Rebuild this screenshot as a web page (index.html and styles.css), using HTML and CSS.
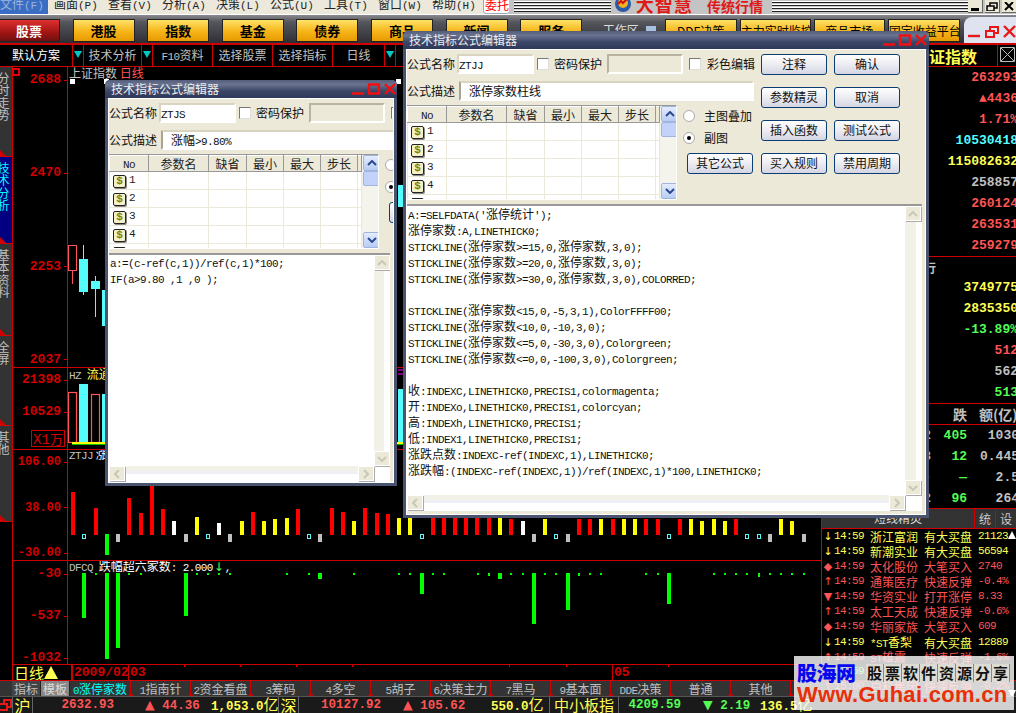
FILE: index.html
```html
<!DOCTYPE html>
<html lang="zh-CN">
<head>
<meta charset="utf-8">
<title>大智慧 传统行情</title>
<link rel="stylesheet" href="styles.css">
</head>
<body>
<div class="app">
  <header class="menubar">
    <nav class="menus">
      <span class="menu active">文件<i>(F)</i></span>
      <span class="menu">画面<i>(P)</i></span>
      <span class="menu">查看<i>(V)</i></span>
      <span class="menu">分析<i>(A)</i></span>
      <span class="menu">决策<i>(L)</i></span>
      <span class="menu">公式<i>(U)</i></span>
      <span class="menu">工具<i>(T)</i></span>
      <span class="menu">窗口<i>(W)</i></span>
      <span class="menu">帮助<i>(H)</i></span>
      <span class="trade">委托</span>
    </nav>
    <div class="brand">
      <span class="stripes s1"></span>
      <svg class="logo" width="16" height="12" viewBox="0 0 16 12"><circle cx="8" cy="4" r="8" fill="#2a5aa8"/><circle cx="8" cy="3" r="5" fill="#f0b020"/><path d="M3 4l3-3 2 2 4-4" stroke="#d01010" stroke-width="2" fill="none"/></svg>
      <b class="brand-a">大智慧</b><b class="brand-b">传统行情</b>
      <span class="stripes s2"></span>
    </div>
    <div class="winbtns">
      <span class="wb"><svg width="10" height="9"><rect x="1" y="6" width="8" height="3"/></svg></span>
      <span class="wb"><svg width="12" height="9" fill="none" stroke="#000" stroke-width="1.5"><path d="M1 4h7v5H1zM4 4V1h7v5H8"/></svg></span>
      <span class="wb"><svg width="10" height="9" fill="none" stroke="#000" stroke-width="2"><path d="M1 0l8 8M9 0L1 8"/></svg></span>
    </div>
  </header>

  <div class="marketbar">
    <span class="mk red">股票</span>
    <span class="mk">港股</span>
    <span class="mk">指数</span>
    <span class="mk">基金</span>
    <span class="mk">债券</span>
    <span class="mk">商品</span>
    <span class="mk">新闻</span>
    <span class="mk">服务</span>
    <span class="workspace">工作区<em></em></span>
    <span class="qk w72">DDE决策</span>
    <span class="qk">主力实时监控</span>
    <span class="qk">商品市场</span>
    <span class="qk w72">固定收益平台</span>
    <div class="mdi">
      <svg width="48" height="14" viewBox="0 0 48 14" fill="none" stroke="#e81818" stroke-width="2.4"><path d="M0 11h12"/><path d="M18 6h8v6h-8zM22 5V2h8v6h-3" stroke-width="2"/><path d="M36 1l11 11M47 1L36 12"/></svg>
    </div>
  </div>

  <div class="toolbar">
    <span class="tb w71">默认方案</span><span class="drop"></span>
    <span class="tb w57 dim">技术分析</span><span class="drop"></span>
    <span class="tb w60 dim"><i>F10</i>资料</span>
    <span class="tb w60 dim">选择股票</span>
    <span class="tb w60 dim">选择指标</span>
    <span class="tb w58 dim">日线</span><span class="drop"></span>
    <span class="rt-title">上证指数</span>
    <span class="closer"><svg width="17" height="17" fill="none" stroke="#bbb"><path d="M1.500 1.500h14v14h-14zM2 2l13 13M15 2L2 15"/></svg></span>
  </div>

  <main class="workspace-area">
    <aside class="side">
      <div class="side-item h90">分时走势</div>
      <div class="side-item h87 on">技术分析</div>
      <div class="side-item h92">基本资料</div>
      <div class="side-item h90">全屏</div>
      <div class="side-item h96">其他</div>
    </aside>

    <div class="panes">
      <section class="pane p1">
        <div class="axis ax1">
          <span class="mark"></span>
          <b>2688</b><b>2470</b><b>2253</b><b>2037</b>
        </div>
        <div class="plot">
          <div class="legend l1"><span class="cj grey">上证指数</span> <span class="cj red-t">日线</span></div>
          <svg class="chart" viewBox="68 67 753 300" width="753" height="300">
            <g fill="#fff"><rect x="70" y="79" width="5" height="5"/><rect x="104" y="79" width="5" height="5"/><rect x="396" y="79" width="5" height="5"/></g>
            <path d="M72.500 271v13" stroke="#ff5555"/><rect x="68.500" y="245.500" width="8" height="25" fill="none" stroke="#ff5555"/>
            <path d="M83.500 245v50M95.500 276v41" stroke="#54fcfc"/>
            <rect x="79" y="259" width="9" height="33" fill="#54fcfc"/><rect x="91" y="281" width="9" height="8" fill="#54fcfc"/><rect x="102" y="290" width="9" height="36" fill="#54fcfc"/>
            <rect x="398" y="185" width="5" height="22" fill="#54fcfc"/>
          </svg>
        </div>
      </section>

      <section class="pane p2">
        <div class="axis ax2">
          <b>21398</b><b>10529</b>
          <span class="unit">X1<span class="cj">万</span></span>
        </div>
        <div class="plot">
          <div class="legend l2"><i class="grey">HZ</i> <span class="cj yel">流通</span></div>
          <svg class="chart" viewBox="68 368 753 81" width="753" height="81">
            <rect x="68.500" y="392.500" width="8" height="50" fill="none" stroke="#ff5555" stroke-width="1.200"/>
            <rect x="79" y="384" width="9" height="59" fill="#54fcfc"/>
            <rect x="91.500" y="394.500" width="8" height="48" fill="none" stroke="#ff5555" stroke-width="1.200"/>
            <rect x="102" y="394" width="9" height="49" fill="#54fcfc"/>
            <rect x="398" y="389" width="5" height="54" fill="#54fcfc"/>
            <rect x="72" y="442" width="331" height="2" fill="#ffff00"/><rect x="72" y="444" width="331" height="1" fill="#00c000"/>
            <path d="M398 370h5M398 374h5" stroke="#ff00ff"/>
          </svg>
        </div>
      </section>

      <section class="pane p3">
        <div class="axis ax3 small"><b>106.00</b><b>38.00</b><b>-30.00</b></div>
        <div class="plot">
          <div class="legend l3"><i class="grey">ZTJJ</i> <span class="cj">涨停</span></div>
          <svg class="chart" viewBox="68 450 753 110" width="753" height="110">
            <g fill="#ff0000">
              <rect x="71" y="492" width="4" height="43"/><rect x="94" y="508" width="4" height="27"/><rect x="127" y="498" width="4" height="37"/><rect x="139" y="513" width="4" height="22"/><rect x="150" y="486" width="4" height="49"/><rect x="161" y="509" width="4" height="26"/><rect x="251" y="512" width="4" height="23"/><rect x="296" y="509" width="4" height="26"/><rect x="330" y="508" width="4" height="27"/><rect x="341" y="512" width="4" height="23"/><rect x="363" y="508" width="4" height="27"/><rect x="375" y="513" width="4" height="22"/><rect x="386" y="514" width="4" height="21"/><rect x="431" y="517" width="4" height="18"/><rect x="442" y="517" width="4" height="18"/><rect x="453" y="517" width="4" height="18"/><rect x="464" y="517" width="4" height="18"/><rect x="475" y="517" width="4" height="18"/><rect x="487" y="517" width="4" height="18"/><rect x="509" y="519" width="4" height="16"/><rect x="577" y="519" width="4" height="16"/><rect x="588" y="519" width="4" height="16"/><rect x="611" y="519" width="4" height="16"/><rect x="644" y="519" width="4" height="16"/><rect x="656" y="519" width="4" height="16"/><rect x="678" y="519" width="4" height="16"/><rect x="734" y="519" width="4" height="16"/>
            </g>
            <g fill="#ffff00">
              <rect x="195" y="517" width="4" height="18"/><rect x="240" y="521" width="4" height="14"/><rect x="262" y="521" width="4" height="14"/><rect x="273" y="519" width="4" height="16"/><rect x="285" y="518" width="4" height="17"/><rect x="352" y="521" width="4" height="14"/><rect x="397" y="518" width="4" height="17"/><rect x="408" y="518" width="4" height="17"/><rect x="498" y="517" width="4" height="18"/><rect x="543" y="519" width="4" height="16"/><rect x="599" y="519" width="4" height="16"/><rect x="622" y="519" width="4" height="16"/><rect x="633" y="519" width="4" height="16"/><rect x="689" y="519" width="4" height="16"/><rect x="700" y="521" width="4" height="14"/><rect x="712" y="519" width="4" height="16"/><rect x="723" y="521" width="4" height="14"/><rect x="779" y="519" width="4" height="16"/><rect x="790" y="521" width="4" height="14"/>
            </g>
            <g fill="#fff"><rect x="172" y="521" width="4" height="14"/><rect x="217" y="523" width="4" height="12"/><rect x="521" y="521" width="4" height="14"/></g>
            <g fill="#c0c0c0"><rect x="116" y="534" width="4" height="8"/><rect x="184" y="534" width="4" height="8"/><rect x="228" y="534" width="4" height="8"/><rect x="318" y="534" width="4" height="8"/><rect x="532" y="534" width="4" height="8"/><rect x="566" y="534" width="4" height="8"/><rect x="768" y="534" width="4" height="8"/><rect x="802" y="534" width="4" height="8"/></g>
            <rect x="105" y="534" width="4" height="21" fill="#00ff00"/>
            <g fill="none" stroke="#54fcfc"><rect x="82.500" y="534.500" width="3" height="4"/><rect x="206.500" y="534.500" width="3" height="4"/><rect x="307.500" y="534.500" width="3" height="4"/><rect x="420.500" y="534.500" width="3" height="4"/><rect x="554.500" y="534.500" width="3" height="4"/><rect x="667.500" y="534.500" width="3" height="4"/><rect x="745.500" y="534.500" width="3" height="4"/><rect x="757.500" y="534.500" width="3" height="4"/></g>
          </svg>
        </div>
      </section>

      <section class="pane p4">
        <div class="axis ax4"><b>-30</b><b>-537</b><b>-1032</b></div>
        <div class="plot">
          <div class="legend l4"><i class="grey">DFCQ</i> <span class="cj">跌幅超六家数</span><i>: 2.000</i><span class="down">↓</span><i>,</i></div>
          <svg class="chart" viewBox="68 561 753 103" width="753" height="103">
            <g fill="#00ff00">
              <rect x="82" y="573" width="4" height="45"/><rect x="105" y="573" width="4" height="86"/><rect x="116" y="573" width="4" height="75"/><rect x="184" y="573" width="4" height="43"/><rect x="318" y="573" width="4" height="6"/><rect x="420" y="573" width="4" height="21"/><rect x="498" y="573" width="4" height="6"/><rect x="532" y="573" width="4" height="51"/><rect x="566" y="573" width="4" height="37"/><rect x="667" y="573" width="4" height="31"/>
              <rect x="95" y="573" width="2" height="2"/><rect x="128" y="573" width="2" height="2"/><rect x="140" y="573" width="2" height="2"/><rect x="196" y="573" width="2" height="2"/><rect x="207" y="573" width="2" height="2"/><rect x="218" y="573" width="2" height="2"/><rect x="229" y="573" width="2" height="2"/><rect x="286" y="573" width="2" height="2"/><rect x="308" y="573" width="2" height="2"/><rect x="353" y="573" width="2" height="2"/><rect x="398" y="573" width="2" height="2"/><rect x="409" y="573" width="2" height="2"/><rect x="432" y="573" width="2" height="2"/><rect x="443" y="573" width="2" height="2"/><rect x="477" y="573" width="2" height="2"/><rect x="488" y="573" width="2" height="3"/><rect x="510" y="573" width="2" height="2"/><rect x="522" y="573" width="2" height="2"/><rect x="544" y="573" width="2" height="2"/><rect x="555" y="573" width="2" height="2"/><rect x="578" y="573" width="2" height="3"/><rect x="589" y="573" width="2" height="2"/><rect x="600" y="573" width="2" height="2"/><rect x="645" y="573" width="2" height="2"/><rect x="657" y="573" width="2" height="2"/><rect x="713" y="573" width="2" height="2"/><rect x="724" y="573" width="2" height="2"/><rect x="735" y="573" width="2" height="2"/><rect x="746" y="573" width="2" height="2"/><rect x="758" y="573" width="2" height="4"/><rect x="769" y="573" width="2" height="2"/><rect x="780" y="573" width="2" height="2"/><rect x="791" y="573" width="2" height="2"/><rect x="803" y="573" width="2" height="2"/>
            </g>
          </svg>
        </div>
      </section>

      <section class="timebar">
        <div class="period"><span class="cj">日线</span><span class="tri"></span></div>
        <div class="dates">
          <b class="d1">2009/02</b><b class="d2">03</b><b class="d3">05</b>
          <svg class="ticks" viewBox="73 0 748 3" width="748" height="3"><path d="M185.500 0v2M241.500 0v2M297.500 0v2M353.500 0v2M510.500 0v2M567.500 0v2M669.500 0v2" stroke="#d00000"/></svg>
        </div>
      </section>
    </div>

    <aside class="rightpanel">
      <div class="qrow red-t"><b>263293</b></div>
      <div class="qrow red-t"><b>▲4436</b></div>
      <div class="qrow red-t"><b>1.71%</b></div>
      <div class="qrow cyan"><b>10530418</b></div>
      <div class="qrow yel"><b>115082632</b></div>
      <div class="qrow grey"><b>258857</b></div>
      <div class="qrow red-t"><b>260124</b></div>
      <div class="qrow red-t"><b>263531</b></div>
      <div class="qrow red-t last"><b>259279</b></div>
      <div class="qrow cut grey"><span class="cj">行</span></div>
      <div class="qrow yel"><b>3749775</b></div>
      <div class="qrow yel"><b>2835350</b></div>
      <div class="qrow green"><b>-13.89%</b></div>
      <div class="qrow red-t"><b>512</b></div>
      <div class="qrow grey"><b>562</b></div>
      <div class="qrow green last"><b>513</b></div>
      <div class="trow head"><span></span><span class="cj">跌</span><span class="cj">额(亿)</span></div>
      <div class="trow"><b class="grey">2</b><b class="green">405</b><b class="grey">1030</b></div>
      <div class="trow"><b class="grey">8</b><b class="green">12</b><b class="grey">0.445</b></div>
      <div class="trow"><b class="grey">-</b><b class="green">—</b><b class="grey">2.5</b></div>
      <div class="trow"><b class="grey">2</b><b class="green">96</b><b class="grey">264</b></div>
      <div class="sprite-head"><span class="sprite-title">短线精灵</span><span class="st">统</span><span class="st">设</span></div>
      <div class="sprites">
        <div class="sp yel"><u>↓</u><i>14:59</i><span>浙江富润</span><span>有大买盘</span><i>21123</i></div>
        <div class="sp yel"><u>↓</u><i>14:59</i><span>新潮实业</span><span>有大买盘</span><i>56594</i></div>
        <div class="sp red-t"><u>◆</u><i>14:59</i><span>太化股份</span><span>大笔买入</span><i>2740</i></div>
        <div class="sp red-t"><u>↑</u><i>14:59</i><span>通策医疗</span><span>快速反弹</span><i>-0.4%</i></div>
        <div class="sp red-t"><u>▼</u><i>14:59</i><span>华资实业</span><span>打开涨停</span><i>8.33</i></div>
        <div class="sp red-t"><u>↑</u><i>14:59</i><span>太工天成</span><span>快速反弹</span><i>-0.6%</i></div>
        <div class="sp red-t"><u>◆</u><i>14:59</i><span>华丽家族</span><span>大笔买入</span><i>609</i></div>
        <div class="sp yel"><u>↓</u><i>14:59</i><span><i>*ST</i>香梨</span><span>有大买盘</span><i>12889</i></div>
        <div class="sp red-t"><u>↑</u><i>14:59</i><span><i>ST</i>雄震</span><span>快速反弹</span><i>-1.6%</i></div>
        <div class="sp green"><u>↓</u><i>14:59</i><span>大唐发电</span><span>大笔卖出</span><i>3120</i></div>
        <div class="sp red-t"><u>↑</u><i>15:00</i><span>白科集团</span><span>快速反弹</span><i>-0.2%</i></div>
        <div class="sp red-t"><u>↑</u><i>15:00</i><span>日科集团</span><span>快速反弹</span><i>-0.3%</i></div>
      </div>
      <span class="sc-up"></span><span class="sc-down"></span>
    </aside>
  </main>

  <nav class="subtabs">
    <span class="st-btn">指标</span><span class="st-btn tpl">模板</span>
    <span class="ft on"><i>0</i>涨停家数</span>
    <span class="ft"><i>1</i>指南针</span>
    <span class="ft"><i>2</i>资金看盘</span>
    <span class="ft"><i>3</i>筹码</span>
    <span class="ft"><i>4</i>多空</span>
    <span class="ft"><i>5</i>胡子</span>
    <span class="ft"><i>6</i>决策主力</span>
    <span class="ft"><i>7</i>黑马</span>
    <span class="ft"><i>9</i>基本面</span>
    <span class="ft"><i>DDE</i>决策</span>
    <span class="ft">普通</span>
    <span class="ft">其他</span>
  </nav>

  <footer class="status">
    <svg class="restore" width="12" height="14" fill="none" stroke="#e81818" stroke-width="2"><path d="M0 6h7v6H0M4 6V2h7v7H8"/></svg>
    <span class="ex">沪</span>
    <b class="n f1 red-t">2632.93</b>
    <b class="n f2 red-t"><u>▲</u> 44.36</b>
    <b class="n f3 yel">1,053.0<span class="big">亿</span></b>
    <span class="ex">深</span>
    <b class="n f4 red-t">10127.92</b>
    <b class="n f5 red-t"><u>▲</u> 105.62</b>
    <b class="n f6 yel">550.0<span class="big">亿</span></b>
    <span class="ex wide">中小板指</span>
    <b class="n f7 green">4209.59</b>
    <b class="n f8 green"><u>▼</u> 2.19</b>
    <b class="n f9 yel">136.5<span class="big">亿</span></b>
  </footer>

  <!-- formula editor window 1 -->
  <section class="dlg dlg1">
    <div class="dlg-title">
      <span>技术指标公式编辑器</span>
      <span class="dlg-ctl"><svg width="44" height="12" viewBox="0 0 44 12" fill="none" stroke="#f01010" stroke-width="2.400"><path d="M0 10.500h12"/><path d="M17 1.500h10v9H17z"/><path d="M33 1l10 10M43 1L33 11"/></svg></span>
    </div>
    <div class="dlg-body">
      <div class="d-top">
        <div class="d-left">
          <div class="frow">
            <label class="cj lab">公式名称</label><span class="fld f-name"><i>ZTJS</i></span>
            <span class="chk"></span><span class="cj lab2">密码保护</span><span class="fld f-pw"></span>
            <span class="chk c2"></span>
          </div>
          <div class="frow r2">
            <label class="cj lab">公式描述</label><span class="fld f-desc"><span class="cj">涨幅</span><i>&gt;9.80%</i></span>
          </div>
          <div class="tbl-row">
            <div class="tbl">
              <table class="params">
                <thead><tr><th class="c0"><i>No</i></th><th class="c1">参数名</th><th class="c2h">缺省</th><th class="c3">最小</th><th class="c3">最大</th><th class="c3">步长</th><th></th></tr></thead>
                <tbody>
                  <tr><td><em class="dollar">$</em><i>1</i></td><td></td><td></td><td></td><td></td><td></td><td></td></tr>
                  <tr><td><em class="dollar">$</em><i>2</i></td><td></td><td></td><td></td><td></td><td></td><td></td></tr>
                  <tr><td><em class="dollar">$</em><i>3</i></td><td></td><td></td><td></td><td></td><td></td><td></td></tr>
                  <tr><td><em class="dollar">$</em><i>4</i></td><td></td><td></td><td></td><td></td><td></td><td></td></tr>
                  <tr><td><em class="dollar">$</em></td><td></td><td></td><td></td><td></td><td></td><td></td></tr>
                </tbody>
              </table>
              <div class="tscroll">
                <span class="sb-btn"><svg width="10" height="6" fill="none" stroke="#2a4a90" stroke-width="2"><path d="M1 5l4-4 4 4"/></svg></span>
                <span class="sb-thumb"></span>
                <span class="sb-fill"></span>
                <span class="sb-btn"><svg width="10" height="6" fill="none" stroke="#2a4a90" stroke-width="2"><path d="M1 1l4 4 4-4"/></svg></span>
              </div>
            </div>
            <div class="side-col">
              <div class="radio-row"><span class="radio"></span></div>
              <div class="radio-row"><span class="radio sel"></span></div>
              <span class="btn"></span>
            </div>
          </div>
        </div>
      </div>
      <div class="editor ed1">
        <div class="code">
          <p>a:=(c-ref(c,1))/ref(c,1)*100;</p>
          <p>IF(a&gt;9.80 ,1 ,0 );</p>
        </div>
        <div class="vs"><span class="dis"><svg width="10" height="6" fill="none" stroke="#c8c8b8" stroke-width="2"><path d="M1 5l4-4 4 4"/></svg></span><span class="dis"><svg width="10" height="6" fill="none" stroke="#c8c8b8" stroke-width="2"><path d="M1 1l4 4 4-4"/></svg></span></div>
        <div class="hs"><span class="dis"><svg width="6" height="10" fill="none" stroke="#c8c8b8" stroke-width="2"><path d="M5 1L1 5l4 4"/></svg></span><span class="dis"><svg width="6" height="10" fill="none" stroke="#c8c8b8" stroke-width="2"><path d="M1 1l4 4-4 4"/></svg></span></div>
      </div>
    </div>
  </section>

  <!-- formula editor window 2 -->
  <section class="dlg dlg2">
    <div class="dlg-title">
      <span>技术指标公式编辑器</span>
      <span class="dlg-ctl"><svg width="44" height="12" viewBox="0 0 44 12" fill="none" stroke="#f01010" stroke-width="2.400"><path d="M0 10.500h12"/><path d="M17 1.500h10v9H17z"/><path d="M33 1l10 10M43 1L33 11"/></svg></span>
    </div>
    <div class="dlg-body">
      <div class="d-top">
        <div class="d-left">
          <div class="frow">
            <label class="cj lab">公式名称</label><span class="fld f-name"><i>ZTJJ</i></span>
            <span class="chk"></span><span class="cj lab2">密码保护</span><span class="fld f-pw"></span>
            <span class="chk c2"></span><span class="cj lab2">彩色编辑</span>
          </div>
          <div class="frow r2">
            <label class="cj lab">公式描述</label><span class="fld f-desc"><span class="cj">涨停家数柱线</span></span>
          </div>
          <div class="tbl-row">
            <div class="tbl">
              <table class="params">
                <thead><tr><th class="c0"><i>No</i></th><th class="c1">参数名</th><th class="c2h">缺省</th><th class="c3">最小</th><th class="c3">最大</th><th class="c3">步长</th><th></th></tr></thead>
                <tbody>
                  <tr><td><em class="dollar">$</em><i>1</i></td><td></td><td></td><td></td><td></td><td></td><td></td></tr>
                  <tr><td><em class="dollar">$</em><i>2</i></td><td></td><td></td><td></td><td></td><td></td><td></td></tr>
                  <tr><td><em class="dollar">$</em><i>3</i></td><td></td><td></td><td></td><td></td><td></td><td></td></tr>
                  <tr><td><em class="dollar">$</em><i>4</i></td><td></td><td></td><td></td><td></td><td></td><td></td></tr>
                  <tr><td><em class="dollar">$</em></td><td></td><td></td><td></td><td></td><td></td><td></td></tr>
                </tbody>
              </table>
              <div class="tscroll">
                <span class="sb-btn"><svg width="10" height="6" fill="none" stroke="#2a4a90" stroke-width="2"><path d="M1 5l4-4 4 4"/></svg></span>
                <span class="sb-thumb"></span>
                <span class="sb-fill"></span>
                <span class="sb-btn"><svg width="10" height="6" fill="none" stroke="#2a4a90" stroke-width="2"><path d="M1 1l4 4 4-4"/></svg></span>
              </div>
            </div>
            <div class="side-col">
              <div class="radio-row"><span class="radio"></span><span class="cj">主图叠加</span></div>
              <div class="radio-row"><span class="radio sel"></span><span class="cj">副图</span></div>
              <span class="btn">其它公式</span>
            </div>
          </div>
        </div>
        <div class="d-btns">
          <span class="btn">注释</span><span class="btn">确认</span>
          <span class="btn">参数精灵</span><span class="btn">取消</span>
          <span class="btn">插入函数</span><span class="btn">测试公式</span>
          <span class="btn">买入规则</span><span class="btn">禁用周期</span>
        </div>
      </div>
      <div class="editor ed2">
        <div class="code">
          <p>A:=SELFDATA('<span>涨停统计</span>');</p>
          <p><span>涨停家数</span>:A,LINETHICK0;</p>
          <p>STICKLINE(<span>涨停家数</span>&gt;=15,0,<span>涨停家数</span>,3,0);</p>
          <p>STICKLINE(<span>涨停家数</span>&gt;=20,0,<span>涨停家数</span>,3,0);</p>
          <p>STICKLINE(<span>涨停家数</span>&gt;=30,0,<span>涨停家数</span>,3,0),COLORRED;</p>
          <p>&nbsp;</p>
          <p>STICKLINE(<span>涨停家数</span>&lt;15,0,-5,3,1),ColorFFFF00;</p>
          <p>STICKLINE(<span>涨停家数</span>&lt;10,0,-10,3,0);</p>
          <p>STICKLINE(<span>涨停家数</span>&lt;=5,0,-30,3,0),Colorgreen;</p>
          <p>STICKLINE(<span>涨停家数</span>&lt;=0,0,-100,3,0),Colorgreen;</p>
          <p>&nbsp;</p>
          <p><span>收</span>:INDEXC,LINETHICK0,PRECIS1,colormagenta;</p>
          <p><span>开</span>:INDEXo,LINETHICK0,PRECIS1,colorcyan;</p>
          <p><span>高</span>:INDEXh,LINETHICK0,PRECIS1;</p>
          <p><span>低</span>:INDEX1,LINETHICK0,PRECIS1;</p>
          <p><span>涨跌点数</span>:INDEXC-ref(INDEXC,1),LINETHICK0;</p>
          <p><span>涨跌幅</span>:(INDEXC-ref(INDEXC,1))/ref(INDEXC,1)*100,LINETHICK0;</p>
        </div>
        <div class="vs"><span class="dis"><svg width="10" height="6" fill="none" stroke="#c8c8b8" stroke-width="2"><path d="M1 5l4-4 4 4"/></svg></span><span class="dis"><svg width="10" height="6" fill="none" stroke="#c8c8b8" stroke-width="2"><path d="M1 1l4 4 4-4"/></svg></span></div>
        <div class="hs"><span class="dis"><svg width="6" height="10" fill="none" stroke="#c8c8b8" stroke-width="2"><path d="M5 1L1 5l4 4"/></svg></span><span class="dis"><svg width="6" height="10" fill="none" stroke="#c8c8b8" stroke-width="2"><path d="M1 1l4 4-4 4"/></svg></span></div>
      </div>
    </div>
  </section>

  <aside class="watermark">
    <div class="wm-top"><b class="wm-cn">股海网</b><span class="wm-slogan"><span>股</span><span>票</span><span>软</span><span>件</span><span>资</span><span>源</span><span>分</span><span>享</span></span></div>
    <b class="wm-url">Www.Guhai.com.cn</b>
  </aside>
</div>
</body>
</html>
```
FILE: styles.css
```css
* { box-sizing: border-box; }
html, body { margin: 0; padding: 0; height: 100%; background: #000; overflow: hidden; }
body { font: 12px/1 "Noto Sans CJK SC", "Noto Sans", sans-serif; color: #c8c8c8; }
i { font: normal 11px/1 "Liberation Mono", monospace; letter-spacing: -.6px; }
u { text-decoration: none; }
p { margin: 0; }
.cj { font-family: "Noto Sans CJK SC", sans-serif; font-size: 12px; }
.grey { color: #c0c0c0; }
.red-t { color: #ff5454; }
.yel { color: #ffff54; }
.cyan { color: #54fcfc; }
.green { color: #54fc54; }

.app { position: relative; width: 1016px; height: 713px; overflow: hidden; display: flex; flex-direction: column; background: #000; }

/* top */
.menubar { height: 15px; flex: none; display: flex; background: #c8c8c8; border-bottom: 1px solid #fff; overflow: hidden; }
.menus { width: 510px; flex: none; background: #ece9dc; display: flex; align-items: flex-start; }
.menu { width: 54px; flex: none; margin-top: -3px; color: #222; height: 17px; white-space: nowrap; line-height: 13px; }
.menu i { letter-spacing: 0; }
.menu.active { width: 48px; margin-right: 6px; background: #3a6dc4; color: #9fb4d8; }
.trade { margin: -3px 0 0 -3px; width: 27px; height: 17px; border: 1px solid #9ab; background: #fff; color: #f00; line-height: 13px; padding-left: 1px; border-radius: 0 0 3px 3px; overflow: hidden; white-space: nowrap; }
.brand { width: 459px; flex: none; margin-left: -1px; display: flex; align-items: flex-start; background: #c4c4c4; padding-left: 5px; }
.stripes { height: 11px; background: repeating-linear-gradient(#fff 0 1px, #222 1px 2px, #ccc 2px 3px); }
.s1 { width: 98px; margin-right: 4px; margin-top: 1px; }
.s2 { width: 198px; margin-left: 4px; margin-top: 1px; }
.logo { flex: none; }
.brand-a { width: 60px; margin: -5px 0 0 5px; color: #e01818; font-size: 18px; line-height: 18px; letter-spacing: 1px; white-space: nowrap; }
.brand-b { width: 62px; color: #e01818; font-size: 14px; line-height: 12px; margin-left: 12px; white-space: nowrap; }
.winbtns { flex: 1; display: flex; gap: 2px; background: #c4c4c4; align-items: flex-start; }
.wb { width: 15px; height: 13px; background: #ece9d8; border-right: 1px solid #666; border-bottom: 1px solid #666; display: flex; align-items: center; justify-content: center; }

.marketbar { height: 28px; flex: none; display: flex; align-items: flex-start; padding-top: 4px; background: linear-gradient(#8a8a90, #55555c 25%, #2e2e34 100%); position: relative; }
.mk { width: 62px; height: 23px; margin-right: 12.600px; background: linear-gradient(#ffe268, #f6b418 55%, #e89a00); border: 1px solid #222; color: #000; font-weight: 700; font-size: 13px; line-height: 21px; text-align: center; flex: none; }
.mk.red { margin-left: -2px; background: linear-gradient(#e03030, #a01414 60%, #701010); color: #fff; }
.workspace { width: 62px; margin-left: 8px; color: #ddd; line-height: 21px; display: flex; align-items: center; gap: 7px; white-space: nowrap; flex: none; }
.workspace em { width: 10px; height: 8px; background: #a8c0e0; display: block; }
.qk { width: 71px; height: 23px; margin-right: 3px; background: linear-gradient(#ffe268, #f6b418 55%, #e89a00); border: 1px solid #222; color: #000; font-size: 12px; line-height: 21px; text-align: center; white-space: nowrap; overflow: hidden; flex: none; }
.w72 { width: 72px; }
.mdi { flex: 1; height: 26px; margin: -2px 0 0 1px; background: #dfe3ef; border-radius: 8px 0 0 0; display: flex; align-items: center; justify-content: flex-end; padding-top: 4px; }

.toolbar { height: 24px; flex: none; display: flex; align-items: center; background: #000; border-top: 2px solid #d00000; border-bottom: 1px solid #d00000; color: #fff; position: relative; }
.tb { height: 100%; line-height: 20px; text-align: center; border-right: 1px solid #d00000; flex: none; }
.tb.dim { color: #c0c0c0; }
.w71 { width: 73px; }
.w57 { width: 58px; }
.w60 { width: 60px; }
.w58 { width: 52px; }
.drop { width: 11px; height: 100%; border-right: 1px solid #d00000; position: relative; flex: none; }
.drop::after { content: ""; position: absolute; left: 1px; top: 6px; border: 4px solid transparent; border-top: 7px solid #00c8c8; border-bottom: 0; }
.rt-title { margin-left: auto; color: #ffff54; font-weight: 700; font-size: 16px; margin-right: 20px; line-height: 20px; }
.closer { width: 20px; height: 24px; margin: -2px -1px 0 0; border: 1px solid #d00000; border-width: 1px 0 1px 1px; display: flex; align-items: center; justify-content: center; }

/* main */
.workspace-area { height: 613px; flex: none; display: flex; }
.side { width: 13px; flex: none; border-right: 1px solid #d00000; display: flex; flex-direction: column; background: #000; }
.side-item { background: #333; color: #c0c0c0; writing-mode: vertical-rl; padding: 5px 3px 0 0; line-height: 12px; letter-spacing: .5px; border-bottom: 1px solid #d00000; position: relative; overflow: hidden; flex: none; }
.side-item::after { content: ""; position: absolute; left: 0; bottom: 0; border-left: 6px solid #d00000; border-top: 6px solid transparent; }
.side-item.on { background: #000080; color: #00ffff; }
.h90 { height: 90px; } .h87 { height: 87px; } .h92 { height: 92px; } .h96 { height: 96px; }

.panes { width: 808px; flex: none; display: flex; flex-direction: column; }
.pane { display: flex; border-bottom: 1px solid #d00000; flex: none; }
.p1 { height: 301px; } .p2 { height: 82px; } .p3 { height: 111px; } .p4 { height: 104px; }
.axis { width: 55px; flex: none; border-right: 1px solid #d00000; display: flex; flex-direction: column; justify-content: space-between; align-items: flex-end; position: relative; }
.axis b { font: bold 13px/14px "Liberation Mono", monospace; color: #d40000; padding-right: 0; display: flex; align-items: center; gap: 3px; }
.axis b::after { content: ""; width: 3px; height: 1px; background: #d00000; }
.small b { font-size: 12px; }
.ax1 { padding: 6px 0 0; }
.ax2 { justify-content: flex-start; padding-top: 5px; gap: 18px; }
.ax3 { padding: 5px 0 0; }
.ax4 { justify-content: flex-start; padding: 6px 0 0; gap: 28px; }
.mark { position: absolute; left: -1px; top: 1px; width: 8px; height: 8px; background: #000; border: 2px solid #e80000; }
.unit { width: 34px; height: 17px; margin: -7px 2px 0 0; border: 1px solid #d00000; color: #d40000; font: 14px/15px "Liberation Mono", monospace; white-space: nowrap; text-align: center; }
.unit .cj { font-size: 13px; }
.plot { flex: 1; position: relative; overflow: hidden; }
.chart { display: block; }
.legend { position: absolute; left: 1px; top: 0; white-space: nowrap; color: #fff; z-index: 1; }
.l2 { top: 0; }
.l2 .cj { margin-left: 3px; }
.l3 { top: -3px; line-height: 14px; }
.l4 { top: -1px; }
.l4 .cj { margin-left: 3px; }
.down { color: #54fc54; font-family: "DejaVu Sans", sans-serif; margin: 0 1px 0 1px; }

.timebar { height: 15px; flex: none; display: flex; }
.period { width: 59px; border-right: 1px solid #d00000; padding-left: 1px; display: flex; align-items: center; }
.period .cj { color: #ffff54; font-size: 15px; white-space: nowrap; width: 30px; }
.tri { border: 7px solid transparent; border-bottom: 13px solid #ffff54; border-top: 0; }
.dates { flex: 1; display: flex; position: relative; color: #d40000; font: bold 13px/15px "Liberation Mono", monospace; }
.dates b { display: block; height: 15px; padding-left: 1px; border-left: 1px solid #d00000; }
.d1 { width: 56px; }
.d2 { width: 484px; }
.d3 { width: 40px; }
.ticks { position: absolute; left: 0; top: 0; }

.rightpanel { width: 195px; flex: none; border-left: 1px solid #d00000; position: relative; display: flex; flex-direction: column; }
.qrow { height: 21px; display: flex; justify-content: flex-end; align-items: center; margin-right: -2px; font: bold 13px/21px "Liberation Mono", monospace; white-space: nowrap; flex: none; }
.qrow.last { border-bottom: 1px solid #d00000; height: 22px; margin-right: 0; padding-right: 0; }
.qrow.last b { margin-right: -2px; }
.cut { justify-content: flex-start; padding-left: 102px; height: 20px; }
.trow { height: 21px; flex: none; display: grid; grid-template-columns: 109px 36px 52px; margin-right: -2px; font: bold 13px/21px "Liberation Mono", monospace; text-align: right; }
.trow.head { height: 21px; border-bottom: 1px solid #d00000; margin-right: 0; color: #c0c0c0; line-height: 20px; grid-template-columns: 109px 36px 50px; }
.trow .cj { white-space: nowrap; font-size: 14px; }
.trow.head .cj:last-child { text-align: left; padding-left: 12px; }
.sprite-head { height: 21px; flex: none; background: #333; border-top: 1px solid #d00000; border-bottom: 1px solid #d00000; display: flex; margin-top: -1px; }
.sprite-title { width: 152px; text-align: center; line-height: 17px; color: #ddd; }
.st { width: 21px; border-left: 1px solid #d00000; text-align: center; line-height: 19px; color: #ccc; flex: none; }
.sprites { display: flex; flex-direction: column; }
.sp { height: 15px; flex: none; display: grid; grid-template-columns: 12px 36px 54px 54px 36px; align-items: center; line-height: 15px; white-space: nowrap; }
.sp u { font: 11px/15px "DejaVu Sans", sans-serif; text-align: center; }
.sc-up, .sc-down { position: absolute; right: 0; width: 8px; height: 8px; background: #fff; }
.sc-up { top: 464px; clip-path: polygon(50% 0, 100% 100%, 0 100%); }
.sc-down { top: 623px; clip-path: polygon(0 0, 100% 0, 50% 100%); }

.subtabs { height: 16px; flex: none; display: flex; background: #333; border-top: 1px solid #d00000; padding-left: 12px; color: #c0c0c0; line-height: 15px; }
.st-btn { width: 29px; text-align: center; flex: none; background: #444; border-right: 1px solid #222; }
.st-btn.tpl { background: #888; color: #ddd; }
.ft { width: 60px; text-align: center; flex: none; border-right: 1px solid #d00000; position: relative; white-space: nowrap; }
.ft.on { color: #00ffff; width: 61px; }
.ft::after { content: ""; position: absolute; right: -4px; bottom: 0; border: 3px solid transparent; border-bottom: 3px solid #d00000; border-top: 0; }

.status { height: 17px; flex: none; display: flex; align-items: center; background: #1a1a1a; border-top: 1px solid #555; position: relative; font-size: 12px; }
.restore { width: 12px; flex: none; }
.ex { width: 21px; color: #ffff54; font-size: 16px; text-align: center; border-left: 1px solid #666; border-right: 1px solid #666; flex: none; line-height: 16px; }
.ex.wide { width: 70px; margin-left: 7px; font-size: 15px; white-space: nowrap; }
.n { font: bold 12.500px/16px "Liberation Mono", monospace; white-space: nowrap; flex: none; }
.n u { font-family: "DejaVu Sans", sans-serif; }
.big { font: 400 15px/15px "Noto Sans CJK SC", sans-serif; }
.f1 { width: 81px; text-align: right; margin-right: 31px; }
.f2 { width: 50px; margin-right: 16px; }
.f3 { width: 67px; }
.f4 { width: 82px; text-align: right; margin-right: 22px; }
.f5 { width: 60px; margin-right: 28px; }
.f6 { width: 51px; }
.f7 { width: 62px; text-align: right; margin-right: 22px; }
.f8 { width: 42px; margin-right: 15px; }
.f9 { width: 56px; }

/* dialogs: windows on a desktop */
.dlg { position: absolute; display: flex; flex-direction: column; background: #4a5470; padding: 0 3px 3px; border-radius: 5px 5px 0 0; overflow: hidden; }
.dlg1 { left: 105px; top: 80px; width: 292px; height: 406px; z-index: 2; }
.dlg2 { left: 403px; top: 31px; width: 526px; height: 487px; z-index: 3; }
.dlg-title { height: 18px; flex: none; display: flex; justify-content: space-between; align-items: center; color: #eee; margin: 0 -3px; padding-left: 6px; background: linear-gradient(#545e7c, #6a7490 25%, #3c4668 60%, #2e3858); }
.dlg-ctl { margin-right: 1px; height: 12px; }
.dlg2 .dlg-ctl { margin-right: 2px; }
.dlg-body { flex: 1; background: #ece9d8; border: 1px solid #fff; display: flex; flex-direction: column; overflow: hidden; min-height: 0; color: #111; }
.d-top { width: 516px; height: 151px; flex: none; display: flex; padding-top: 4px; }
.d-left { width: 351px; flex: none; }
.frow { height: 20px; display: flex; align-items: center; }
.r2 { margin-top: 7px; }
.lab { width: 50px; flex: none; white-space: nowrap; }
.lab2 { width: 49px; flex: none; white-space: nowrap; }
.fld { height: 20px; background: #fff; border: 2px solid; border-color: #d8d4c0 #fff #fff #d8d4c0; display: block; flex: none; overflow: hidden; line-height: 15px; white-space: nowrap; }
.fld i { color: #111; }
.f-name { width: 77px; }
.f-pw { width: 76px; margin-left: 4px; background: #ece9d8; border-color: #b8b4a0 #fff #fff #b8b4a0; }
.f-desc { width: 295px; margin-left: 2px; height: 20px; padding-left: 8px; border-left: 2px solid #a8a490; }
.chk { width: 12px; height: 12px; margin: 0 5px 0 3px; background: #fff; border: 1px solid; border-color: #777 #ddd #ddd #777; flex: none; }
.chk.c2 { margin-left: 6px; margin-right: 6px; }
.tbl-row { display: flex; margin: 4px 0 0 -1px; height: 95px; }
.tbl { width: 271px; height: 95px; flex: none; display: flex; border: 1px solid; border-color: #999 #fff #fff #999; background: #f4f2e6; overflow: hidden; }
.params { width: 253px; border-collapse: collapse; table-layout: fixed; flex: none; background: #fff; align-self: flex-start; }
.params th { height: 16px; background: #ece9d8; border: 1px solid; border-color: #fff #999 #999 #fff; font-weight: 400; color: #222; padding: 0; font-size: 12px; line-height: 14px; }
.params td { height: 18px; padding: 0 0 0 3px; border: 1px solid #ece9d8; vertical-align: middle; white-space: nowrap; }
.c0 { width: 39px; } .c1 { width: 60px; } .c2h { width: 38px; } .c3 { width: 37px; }
.dollar { display: inline-block; width: 13px; height: 13px; background: #f4f0c8; border: 1px solid #222; border-radius: 2px; box-shadow: 1px 1px 0 #888; font: bold 11px/11px "Liberation Mono", monospace; color: #808000; text-align: center; margin-right: 3px; vertical-align: middle; }
.params td i { vertical-align: middle; color: #222; }
.tscroll { width: 17px; margin-left: 1px; flex: none; display: flex; flex-direction: column; background: #f4f4ec; }
.sb-btn { height: 16px; flex: none; background: linear-gradient(#e4ecff, #b8ccf4); border: 1px solid #a0b4dc; border-radius: 2px; display: flex; align-items: center; justify-content: center; }
.sb-thumb { height: 15px; flex: none; background: #c2d2f8; border: 1px solid #a0b4dc; border-radius: 2px; }
.sb-fill { flex: 1; }
.side-col { flex: 1; padding-left: 1px; display: flex; flex-direction: column; color: #111; min-width: 0; }
.radio-row { display: flex; align-items: center; gap: 6px; height: 22px; white-space: nowrap; margin-left: 5px; }
.radio { width: 12px; height: 12px; border-radius: 50%; background: #fff; border: 1px solid #aaa; flex: none; position: relative; margin-right: 3px; }
.radio.sel::after { content: ""; position: absolute; left: 3px; top: 3px; width: 4px; height: 4px; background: #000; border-radius: 50%; }
.side-col .btn { margin: 4px 0 0 9px; width: 66px; }
.btn { height: 21px; display: block; background: linear-gradient(#fff, #f0f0f4 40%, #d4d6e4); border: 1px solid #0c3c74; border-radius: 3px; text-align: center; line-height: 18px; color: #111; white-space: nowrap; }
.d-btns { width: 139px; flex: none; margin-left: 3px; display: grid; grid-template-columns: 66px 66px; column-gap: 7px; grid-auto-rows: 21px; row-gap: 12px; align-content: start; }
.editor { flex: none; margin: 3px 3px 0 -1px; position: relative; display: grid; background: #fff; border-top: 2px solid #999; border-left: 1px solid #999; overflow: hidden; }
.ed1 { width: 282px; height: 229px; grid-template-columns: 1fr 16px; grid-template-rows: 1fr 16px; }
.ed2 { width: 516px; height: 307px; grid-template-columns: 1fr 17px; grid-template-rows: 1fr 16px; }
.code { padding: 0 0 0 1px; overflow: hidden; min-width: 0; }
.code p { font: 11px/16px "Liberation Mono", monospace; letter-spacing: -.6px; color: #111; white-space: pre; height: 16px; }
.code span { font: 12px/16px "Noto Sans CJK SC", sans-serif; letter-spacing: 0; }
.ed1 .code { padding-top: 1px; }
.vs { background: linear-gradient(90deg, #f2f1e8 0 65%, #fff 65%); display: flex; flex-direction: column; justify-content: space-between; grid-row: 1; grid-column: 2; }
.hs { background: linear-gradient(#f2f1e8 0 30%, #eef0f6 30% 50%, #fff 50%); display: flex; justify-content: space-between; grid-row: 2; grid-column: 1; }
.dis { width: 16px; height: 15px; background: #ece9d8; border: 1px solid #fff; box-shadow: 1px 1px 0 #aaa; display: flex; align-items: center; justify-content: center; flex: none; }

/* watermark */
.watermark { position: absolute; left: 794px; top: 656px; width: 220px; height: 54px; z-index: 4; background: rgba(255, 255, 255, .8); display: flex; flex-direction: column; padding: 7px 0 0 3px; }
.wm-top { display: flex; height: 20px; align-items: center; }
.wm-cn { color: #0808f0; font-size: 20px; letter-spacing: -.500px; width: 69px; white-space: nowrap; font-weight: 900; }
.wm-slogan { display: flex; background: #b0b0a8; height: 18px; }
.wm-slogan span { width: 18px; color: #111; font-weight: 700; font-size: 15px; line-height: 17px; text-align: center; background: #dcdcd4; border-right: 1px solid #888; }
.wm-url { color: #e83008; font: bold 22px/24px "Liberation Sans", sans-serif; letter-spacing: .300px; white-space: nowrap; }
```
